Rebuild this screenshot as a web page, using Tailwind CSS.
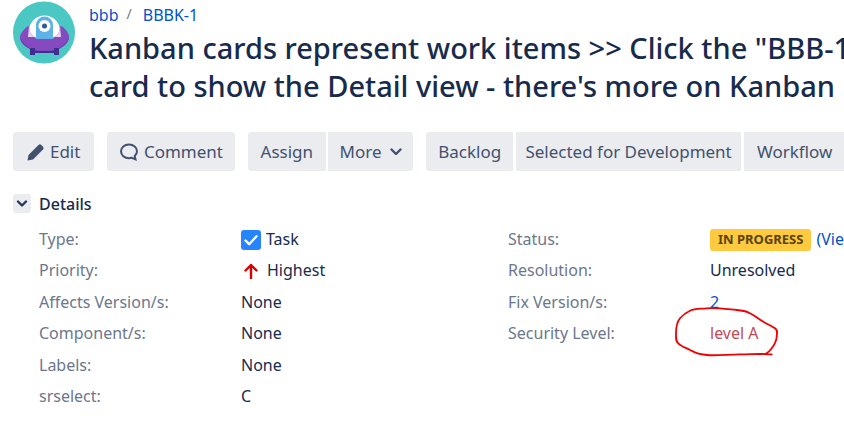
<!DOCTYPE html>
<html lang="en">
<head>
  <meta charset="UTF-8" />
  <title>BBBK-1</title>
  <script src="https://cdn.jsdelivr.net/npm/@tailwindcss/browser@4"></script>
</head>
<body class="relative h-[442px] w-[844px] overflow-hidden bg-white font-['Noto_Sans',sans-serif] text-[#172b4d]">

  <!-- issue header -->
  <header class="flex h-[132px] pl-[13px] pt-px">
    <svg class="h-[63px] w-[63px] shrink-0" viewBox="0 0 63 63">
      <circle cx="31" cy="31.5" r="31" fill="#4bc7c4" />
      <path d="M16 30a15.500 15.500 0 0 1 31 0v10H16z" fill="#fff" />
      <path d="M7 35c3-7 8-10 9-10 0 8 4 13 15.500 13S47 33 47 25c2 0 7 3 9 10 1 8-10 15-25 15S6 43 7 35z" fill="#8549c0" />
      <path d="M16 25c0 8 4 13 15.500 13S47 33 47 25l1 11H15z" fill="#e4d8f2" />
      <path d="M23 38V24a8.500 8.500 0 0 1 17 0v14z" fill="#5db2e8" />
      <circle cx="31.500" cy="25" r="6" fill="#fff" />
      <circle cx="31.500" cy="25" r="2.500" fill="#2c5a94" />
      <path d="M7 36c3 9 13 14 24.500 14S53 45 56 36c-1 9-12 15-24.500 15S8 45 7 36z" fill="#6a3aa8" />
      <path d="M17 47h5v7h-5zM41 47h5v7h-5zM21 50h21v2H21z" fill="#3f2d91" />
    </svg>
    <div class="ml-[13px] min-w-0">
      <nav class="flex h-[28px] items-center text-[16px] text-[#0052cc]">
        <span>bbb</span>
        <span class="ml-2 mb-1 text-[14px] text-[#6b778c]">/</span>
        <span class="ml-[11px]">BBBK-1</span>
      </nav>
      <h1 class="w-[800px] text-[29px] font-medium leading-[38px] whitespace-nowrap">
        Kanban cards represent work items &gt;&gt; Click the "BBB-1"<br />card to show the Detail view - there's more on Kanban
      </h1>
    </div>
  </header>

  <!-- toolbar -->
  <div class="flex h-[39px] pl-[13px] text-[17px] text-[#42526e]">
    <button class="flex w-[85px] items-center justify-center gap-[5px] rounded-[3px] bg-[#ebecf0]">
      <svg class="h-[18px] w-[18px]" viewBox="0 0 18 18"><path d="M0.500 17.500l1-5.500L11.500 2a2 2 0 0 1 2.800 0l1.700 1.700a2 2 0 0 1 0 2.800L6 16.500z" fill="#42526e" /></svg>
      Edit
    </button>
    <button class="ml-[13px] flex w-[133px] items-center justify-center gap-[5px] rounded-[3px] bg-[#ebecf0]">
      <svg class="h-[20px] w-[20px]" viewBox="0 0 20 20"><path d="M10 2.500c4.500 0 8 2.900 8 6.800 0 2-.9 3.600-2.300 4.800l.8 3.300-3.700-1.600c-.9.300-1.800.400-2.800.400-4.500 0-8-3-8-6.900s3.500-6.800 8-6.800z" fill="none" stroke="#42526e" stroke-width="2" /></svg>
      Comment
    </button>
    <button class="ml-[13px] w-[82px] rounded-l-[3px] bg-[#ebecf0]">Assign</button>
    <button class="ml-[2px] flex w-[89px] items-center justify-center gap-2 rounded-r-[3px] bg-[#ebecf0]">
      More
      <svg class="h-[10px] w-[12px]" viewBox="0 0 12 10"><path d="M1.500 2.500L6 7l4.500-4.500" fill="none" stroke="#42526e" stroke-width="2.400" stroke-linecap="round" stroke-linejoin="round" /></svg>
    </button>
    <button class="ml-[13px] w-[91px] rounded-l-[3px] bg-[#ebecf0]">Backlog</button>
    <button class="ml-[3px] w-[235px] bg-[#ebecf0]">Selected for Development</button>
    <button class="ml-[3px] w-[100px] shrink-0 bg-[#ebecf0] pl-[13px] text-left">Workflow</button>
  </div>

  <!-- details -->
  <div class="mt-[23px] flex h-[19px] items-center pl-[13px]">
    <span class="flex h-[19px] w-[18px] items-center justify-center rounded-[3px] bg-[#ebecf0]">
      <svg class="h-[10px] w-[12px]" viewBox="0 0 12 10"><path d="M2 2.500L6 6.500l4-4" fill="none" stroke="#253858" stroke-width="2.400" stroke-linecap="round" stroke-linejoin="round" /></svg>
    </span>
    <h2 class="ml-2 text-[16px] font-medium">Details</h2>
  </div>

  <div class="mt-[11px] grid grid-cols-[202px_267px_202px_1fr] pl-[39px] text-[16px] leading-[31.4px]">
    <div class="text-[#6b778c]">Type:</div>
    <div class="flex items-center gap-[5px]">
      <svg class="h-[20px] w-[20px]" viewBox="0 0 20 20"><rect width="20" height="20" rx="3" fill="#2684ff" /><path d="M4.500 10.500l3.700 3.700 7.300-8" fill="none" stroke="#fff" stroke-width="2.400" stroke-linecap="round" stroke-linejoin="round" /></svg>
      Task
    </div>
    <div class="text-[#6b778c]">Status:</div>
    <div class="flex items-center whitespace-nowrap">
      <span class="flex h-[22px] items-center rounded-[3px] bg-[#ffc940] px-2 text-[13px] font-bold text-[#594300]">IN PROGRESS</span>
      <span class="ml-[5px] text-[#0052cc]">(View Workflow)</span>
    </div>

    <div class="text-[#6b778c]">Priority:</div>
    <div class="flex items-center gap-[9px] pl-[3px]">
      <svg class="h-[16px] w-[14px]" viewBox="0 0 14 16"><path d="M7 15V2M1.500 7.500L7 2l5.500 5.500" fill="none" stroke="#d50000" stroke-width="2.400" stroke-linecap="round" stroke-linejoin="round" /></svg>
      Highest
    </div>
    <div class="text-[#6b778c]">Resolution:</div>
    <div>Unresolved</div>

    <div class="text-[#6b778c]">Affects Version/s:</div>
    <div>None</div>
    <div class="text-[#6b778c]">Fix Version/s:</div>
    <div class="text-[#0052cc]">2</div>

    <div class="text-[#6b778c]">Component/s:</div>
    <div>None</div>
    <div class="text-[#6b778c]">Security Level:</div>
    <div class="text-[#bf4a56]">level A</div>

    <div class="text-[#6b778c]">Labels:</div>
    <div>None</div>
    <div class="col-span-2"></div>

    <div class="text-[#6b778c]">srselect:</div>
    <div>C</div>
  </div>

  <!-- hand-drawn annotation -->
  <svg class="pointer-events-none absolute inset-0 h-[442px] w-[844px]" viewBox="0 0 844 442">
    <path d="M771.700 354.300C760 353.500 752 354.300 740 354.300S716 356 706.700 355 696 353 690 350 681 346 678.300 343.300 676 339 676 333.300 677 322 680 318.300 685 313 690 310.700 698 309 706.700 308.300 726 309 736.700 310 745 311 750 313.300 757 318 763.300 321.700 772 326 775 328.300 777 332 776.700 336.700 775 344 771.700 348.300 769 352 765 354.300" fill="none" stroke="#f00000" stroke-width="1.800" stroke-linecap="round" />
  </svg>
</body>
</html>
